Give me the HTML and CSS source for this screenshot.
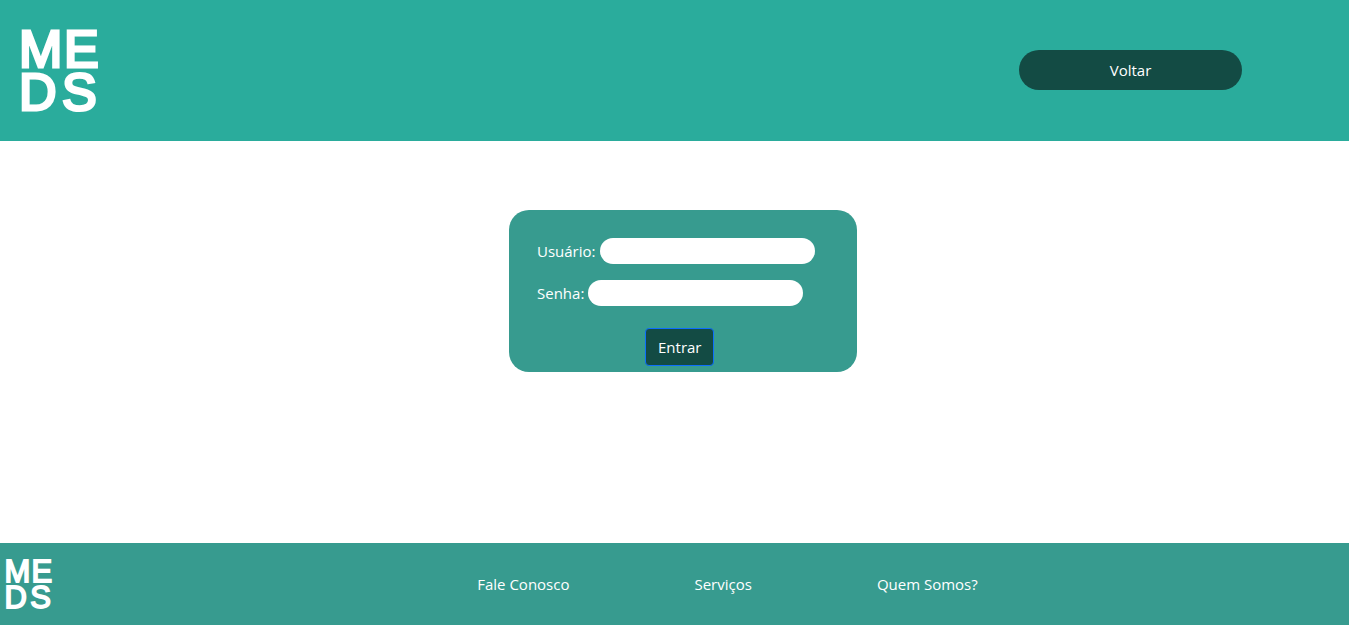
FILE: index.html
```html
<!DOCTYPE html>
<html lang="pt-BR">
<head>
  <meta charset="utf-8">
  <meta name="viewport" content="width=device-width, initial-scale=1">
  <title>MEDS</title>
  <link rel="stylesheet" href="styles.css">
</head>
<body>
  <header class="header">
    <svg class="logo" viewBox="0 0 80 84" role="img" aria-label="MEDS">
      <text class="logo-text" x="-1" y="39">M<tspan x="44">E</tspan></text>
      <text class="logo-text" x="-1" y="82">D<tspan x="42">S</tspan></text>
    </svg>
    <button class="back" type="button">Voltar</button>
  </header>
  <main class="main">
    <form class="card">
      <div class="field">
        <label for="usuario">Usuário:</label>
        <input class="input" id="usuario" type="text">
      </div>
      <div class="field">
        <label for="senha">Senha:</label>
        <input class="input" id="senha" type="password">
      </div>
      <button class="submit" type="button">Entrar</button>
    </form>
  </main>
  <footer class="footer">
    <svg class="logo logo-small" viewBox="0 0 80 84" role="img" aria-label="MEDS">
      <text class="logo-text" x="-1" y="39">M<tspan x="44">E</tspan></text>
      <text class="logo-text" x="-1" y="82">D<tspan x="42">S</tspan></text>
    </svg>
    <nav class="links">
      <a class="link" href="#">Fale Conosco</a>
      <a class="link" href="#">Serviços</a>
      <a class="link" href="#">Quem Somos?</a>
    </nav>
  </footer>
</body>
</html>
```
FILE: styles.css
```css
* {
  box-sizing: border-box;
}

body {
  margin: 0;
  min-height: 100vh;
  display: flex;
  flex-direction: column;
  background: #fff;
  color: #fff;
  font-family: "Segoe UI", "Open Sans", "Noto Sans", sans-serif;
  font-size: 15px;
  line-height: 24px;
}

button,
input {
  font: inherit;
}

.header {
  display: flex;
  align-items: center;
  justify-content: space-between;
  padding: 28px 107px 29px 20px;
  background: #2aac9c;
}

.logo {
  width: 80px;
  height: 84px;
  overflow: visible;
}

.logo-small {
  width: 48px;
  height: 50px;
}

.logo-text {
  fill: #fff;
  stroke: #fff;
  stroke-width: 3px;
  font-family: "Liberation Sans", Arial, sans-serif;
  font-size: 52px;
}

.back {
  width: 223px;
  padding: 8px;
  border: 0;
  border-radius: 20px;
  background: #134b44;
  color: #fff;
}

.main {
  flex: 1;
  padding: 69px 0 24px 17px;
}

.card {
  display: flex;
  flex-direction: column;
  gap: 16px;
  width: 348px;
  max-width: 100%;
  margin: 0 auto;
  padding: 28px 28px 6px;
  border-radius: 20px;
  background: #379b8f;
}

.field {
  display: flex;
  align-items: center;
  gap: 4px;
}

.input {
  width: 215px;
  height: 26px;
  padding: 0 12px;
  border: 0;
  border-radius: 13px;
  background: #fff;
}

.submit {
  margin: 6px 0 0 108px;
  align-self: flex-start;
  padding: 6px 12px;
  border: 1px solid #0d6efd;
  border-radius: 4px;
  background: #134b44;
  color: #fff;
}

.footer {
  display: flex;
  align-items: center;
  padding: 16px 5px;
  background: #379b8f;
}

.links {
  flex: 1;
  display: flex;
  justify-content: center;
  gap: 125px;
  padding-left: 58px;
}

.link {
  color: #fff;
  text-decoration: none;
}
```
